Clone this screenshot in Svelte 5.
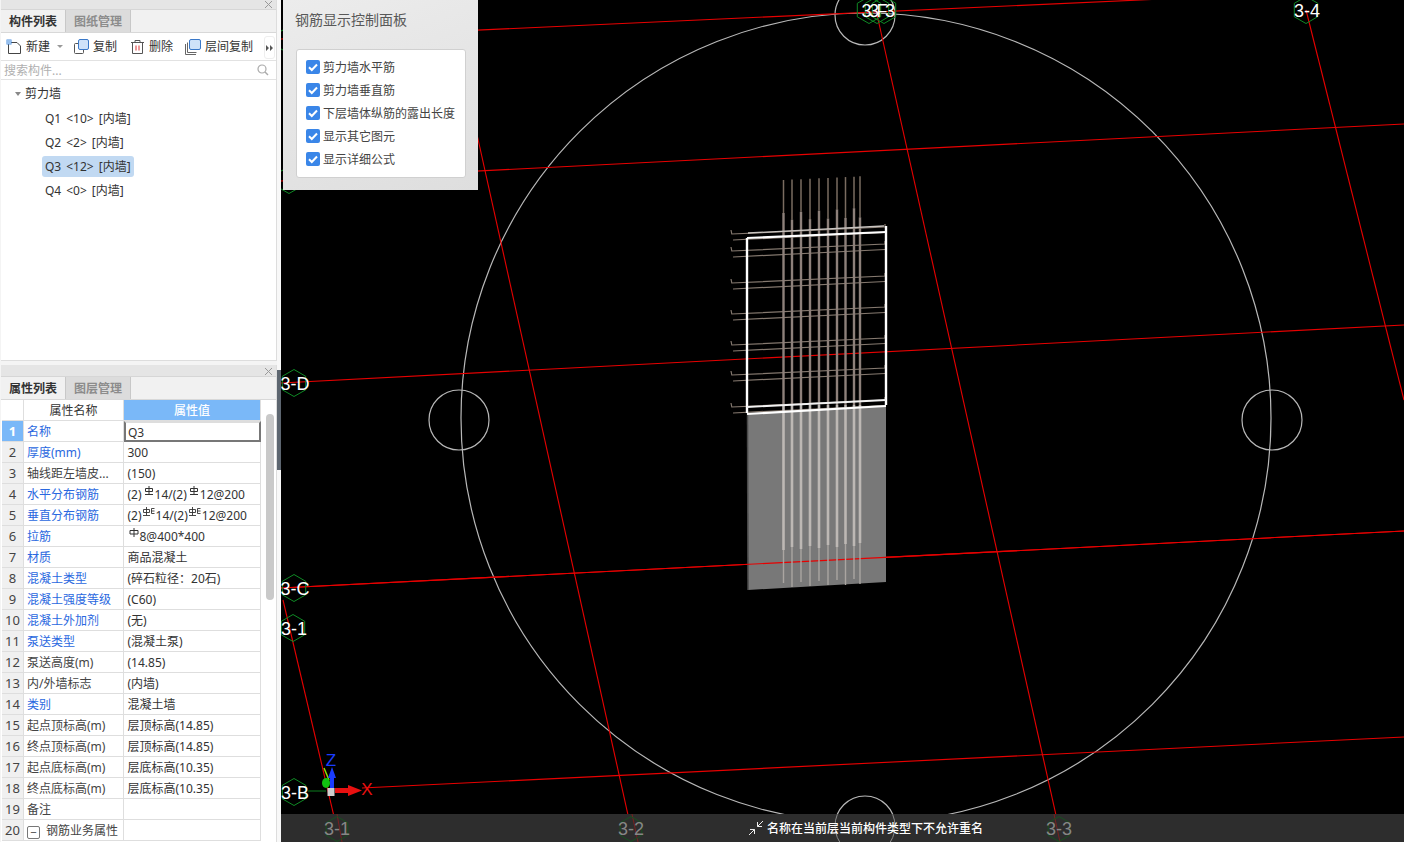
<script>
  const tree = [
    { q: 'Q1', n: '<10>', t: '[内墙]' },
    { q: 'Q2', n: '<2>', t: '[内墙]' },
    { q: 'Q3', n: '<12>', t: '[内墙]', sel: true },
    { q: 'Q4', n: '<0>', t: '[内墙]' }
  ];
  const rows = [
    ['名称', 'Q3', 1], ['厚度(mm)', '300', 1], ['轴线距左墙皮...', '(150)', 0],
    ['水平分布钢筋', 'h', 1], ['垂直分布钢筋', 'v', 1], ['拉筋', 't', 1],
    ['材质', '商品混凝土', 1], ['混凝土类型', '(碎石粒径：20石)', 1], ['混凝土强度等级', '(C60)', 1],
    ['混凝土外加剂', '(无)', 1], ['泵送类型', '(混凝土泵)', 1], ['泵送高度(m)', '(14.85)', 0],
    ['内/外墙标志', '(内墙)', 0], ['类别', '混凝土墙', 1], ['起点顶标高(m)', '层顶标高(14.85)', 0],
    ['终点顶标高(m)', '层顶标高(14.85)', 0], ['起点底标高(m)', '层底标高(10.35)', 0], ['终点底标高(m)', '层底标高(10.35)', 0],
    ['备注', '', 0], ['钢筋业务属性', '', 0]
  ];
  const checks = ['剪力墙水平筋', '剪力墙垂直筋', '下层墙体纵筋的露出长度', '显示其它图元', '显示详细公式'];

  const redLines = [
    [281, 39, 1404, -12], [281, 181, 1404, 124], [281, 383, 1404, 325], [281, 588, 1404, 531], [362, 788, 1404, 737],
    [283, 600, 340, 842], [476, 130, 634, 842], [876, 10, 1062, 842], [1306, 10, 1404, 400]
  ];
  const circles = [[866, 418, 405], [865, 15, 30], [865, 826, 30], [459, 420, 30], [1272, 420, 30]];
  const hex = (cx, cy, r = 13.5) =>
    [0, 1, 2, 3, 4, 5].map((i) => {
      const a = Math.PI / 3 * i + Math.PI / 2;
      return `${(cx + r * Math.cos(a)).toFixed(1)},${(cy + r * Math.sin(a)).toFixed(1)}`;
    }).join(' ');
  const labels = [
    [295, 383, '3-D'], [295, 588, '3-C'], [294, 628, '3-1'], [295, 792, '3-B'], [1307, 10, '3-4']
  ];
  const hexOnly = [[289, 40], [289, 180], [869, 10], [884, 10], [877, 10]];
  const bottomLabels = [[337, 829, '3-1'], [631, 829, '3-2'], [1059, 829, '3-3']];

  const barX = [783.5, 792, 801, 810, 819, 828, 837, 845.5, 854, 860];
  const bars = barX.map((x, i) => ({
    x,
    top: 180 - i * 0.42,
    thick: i % 2 ? 220 - i * 0.3 : 213 - i * 0.6,
    wallEnd: [550, 547, 549, 546, 548, 545, 547, 544, 546, 543][i],
    end: [583, 587, 582, 586, 581, 585, 580, 585, 579, 584][i]
  }));
  const hooks = [234, 251, 283, 314, 345, 375, 407];
</script>

<div class="app">
  <aside class="side">
    <section class="panel top">
      <div class="strip"><svg class="close" width="9" height="9" viewBox="0 0 9 9"><path d="M1 1l7 7M8 1l-7 7" stroke="#999" stroke-width="1"/></svg></div>
      <div class="tabs">
        <span class="tab on">构件列表</span><span class="tab">图纸管理</span>
      </div>
      <div class="tools">
        <span class="tool first">
          <svg width="16" height="16" viewBox="0 0 16 16"><path d="M2.500 3.500H11l3.500 3.500v7.500h-12z" fill="#fff" stroke="#444"/><rect x="0.500" y="0.500" width="5" height="5" fill="#4a90e2"/><path d="M1 2h4M1 4h4M2 1v4M4 1v4" stroke="#cfe3f7" stroke-width=".7"/></svg>
          新建<i class="caret"></i>
        </span>
        <span class="tool copy">
          <svg width="16" height="16" viewBox="0 0 16 16"><rect x="1.500" y="4.500" width="9" height="10" rx="1" fill="#fff" stroke="#555"/><rect x="5.500" y="0.500" width="10" height="10" rx="1.500" fill="#cfe2f9" stroke="#3a78c8"/></svg>
          复制
        </span>
        <span class="tool del">
          <svg width="15" height="16" viewBox="0 0 15 16"><path d="M1 3.500h13M5 3.500V1.500h5v2M2.500 3.500v11h10v-11" fill="none" stroke="#555"/><path d="M6 6.500v5M9 6.500v5" stroke="#d33" stroke-width="1"/></svg>
          删除
        </span>
        <span class="tool layer">
          <svg width="16" height="16" viewBox="0 0 16 16"><path d="M0.500 5v10.500H11M2.500 3.500v10h9" fill="none" stroke="#666"/><rect x="4.500" y="0.500" width="11" height="10" rx="1.500" fill="#cfe2f9" stroke="#3a78c8"/></svg>
          层间复制
        </span>
        <span class="more">
          <svg width="7" height="6" viewBox="0 0 7 6"><path d="M0 0l3 3-3 3zM4 0l3 3-3 3z" fill="#555"/></svg>
        </span>
      </div>
      <div class="search">
        <span>搜索构件...</span>
        <svg width="12" height="12" viewBox="0 0 12 12"><circle cx="5" cy="5" r="4" fill="none" stroke="#aaa" stroke-width="1.200"/><path d="M8 8l3 3" stroke="#aaa" stroke-width="1.400"/></svg>
      </div>
      <div class="tree">
        <div class="node"><i class="tri"></i>剪力墙</div>
        {#each tree as t}
          <div class="leaf"><span class="pill" class:sel={t.sel}>{t.q}<b>{t.n}</b>{t.t}</span></div>
        {/each}
      </div>
    </section>

    <section class="panel bottom">
      <div class="strip low"><svg class="close" width="9" height="9" viewBox="0 0 9 9"><path d="M1 1l7 7M8 1l-7 7" stroke="#999" stroke-width="1"/></svg></div>
      <div class="tabs">
        <span class="tab on">属性列表</span><span class="tab">图层管理</span>
      </div>
      <div class="body">
        <div class="grid">
          <div class="cell num head"></div>
          <div class="cell hname">属性名称</div>
          <div class="cell hval">属性值</div>
          {#each rows as r, i}
            <div class="cell num" class:cur={i === 0}>{i + 1}</div>
            <div class="cell name" class:link={r[2]}>
              {#if i === 19}<i class="minus">−</i>{/if}{r[0]}
            </div>
            <div class="cell val" class:edit={i === 0}>
              {#if r[1] === 'h'}
                (2)<svg class="rb" width="10" height="11" viewBox="0 0 10 11"><path d="M1.500 2.500h7v3h-7zM5 0v8.500M1 8.500h8" fill="none" stroke="#333"/></svg>14/(2)<svg class="rb" width="10" height="11" viewBox="0 0 10 11"><path d="M1.500 2.500h7v3h-7zM5 0v8.500M1 8.500h8" fill="none" stroke="#333"/></svg>12@200
              {:else if r[1] === 'v'}
                (2)<svg class="rb tight" width="12" height="11" viewBox="0 0 12 11"><path d="M.5 2.500h6v3h-6zM3.500 0v8.500M0 8.500h7M8.500 1.500h3M8.500 1.500v5h3M8.500 4h3" fill="none" stroke="#333" stroke-width=".9"/></svg>14/(2)<svg class="rb tight" width="12" height="11" viewBox="0 0 12 11"><path d="M.5 2.500h6v3h-6zM3.500 0v8.500M0 8.500h7M8.500 1.500h3M8.500 1.500v5h3M8.500 4h3" fill="none" stroke="#333" stroke-width=".9"/></svg>12@200
              {:else if r[1] === 't'}
                <svg class="rb tie" width="10" height="11" viewBox="0 0 10 11"><path d="M1 2.500h8v3.500H1zM5 0v9" fill="none" stroke="#333"/></svg>8@400*400
              {:else}
                {r[1]}
              {/if}
            </div>
          {/each}
        </div>
        <div class="scroll"><i></i></div>
      </div>
    </section>
  </aside>

  <div class="gutter"><i></i></div>

  <main class="view">
    <svg class="scene" width="1404" height="842" viewBox="0 0 1404 842">
      {#each circles as c}
        <circle cx={c[0]} cy={c[1]} r={c[2]} fill="none" stroke="#b8b8b8" stroke-width="1.200"/>
      {/each}
      {#each redLines as l}
        <line x1={l[0]} y1={l[1]} x2={l[2]} y2={l[3]} stroke="#e80000" stroke-width="1.100"/>
      {/each}

      <polygon points="747,413 886,405 886,582 748,590" fill="#787878"/>
      <line x1="747.500" y1="413" x2="748" y2="590" stroke="#4a4a4a" stroke-width="1.500"/>
      <line x1="281" y1="588" x2="1404" y2="531" stroke="#e80000" stroke-width="1.100"/>

      {#each hooks as y}
        <path d={`M731 ${y - 4}l.8 4 L885 ${y - 7}v-3`} fill="none" stroke="#85796f" stroke-width="1.200"/>
        <line x1="733" y1={y + 6} x2="885" y2={y - 1.500} stroke="#85796f" stroke-width="1.200"/>
      {/each}

      {#each bars as b}
        <line x1={b.x} y1={b.top} x2={b.x} y2={b.thick} stroke="#7a6c60" stroke-width="1.500"/>
        <line x1={b.x} y1={b.thick} x2={b.x} y2="405" stroke="#8d807a" stroke-width="2.400"/>
        <line x1={b.x} y1="405" x2={b.x} y2={b.wallEnd} stroke="#bdb8b4" stroke-width="2.600"/>
        <line x1={b.x} y1={b.wallEnd} x2={b.x} y2={b.end} stroke="#aaa5a1" stroke-width="1.400"/>
      {/each}

      <line x1="748" y1="233" x2="884" y2="226" stroke="#c9c4c0" stroke-width="1.300"/>
      <line x1="886" y1="226" x2="886" y2="405" stroke="#fff" stroke-width="2.400"/>
      <line x1="747" y1="238" x2="747" y2="413" stroke="#fff" stroke-width="2.400"/>
      <line x1="747" y1="238" x2="886" y2="232" stroke="#fff" stroke-width="2.200"/>
      <line x1="747" y1="407" x2="886" y2="400" stroke="#f2f2f2" stroke-width="1.800"/>
      <line x1="747" y1="414" x2="886" y2="406" stroke="#fff" stroke-width="2.200"/>

      {#each hexOnly as h}
        <polygon points={hex(h[0], h[1])} fill="none" stroke="#0f8a25" stroke-width="1"/>
      {/each}
      <text x="877" y="16.500" class="lab packed">33F3</text>
      {#each labels as l}
        <polygon points={hex(l[0] - 1, l[1])} fill="none" stroke="#0f8a25" stroke-width="1"/>
        <text x={l[0]} y={l[1] + 6.500} class="lab">{l[2]}</text>
      {/each}

      <line x1="308" y1="791" x2="326" y2="791" stroke="#0c7d1e"/>
      <line x1="324" y1="768" x2="329" y2="780" stroke="#8fe000" stroke-width="1.500"/>
      <ellipse cx="326" cy="783" rx="4" ry="5" fill="#10c010"/>
      <rect x="330" y="775" width="4" height="14" fill="#1a3cff"/>
      <polygon points="332,767 336,778 328,778" fill="#1a3cff"/>
      <rect x="335" y="788" width="15" height="5" fill="#e81010"/>
      <polygon points="348,785 362,790.500 348,796" fill="#e81010"/>
      <rect x="327.500" y="788" width="7" height="8" fill="#cfcfcf"/>
      <text x="331" y="766" class="axis z">Z</text>
      <text x="367" y="795" class="axis x">X</text>
    </svg>

    <div class="ctrl">
      <div class="ctitle">钢筋显示控制面板</div>
      <div class="cbox">
        {#each checks as c}
          <label class="chk">
            <span class="mark"><svg width="14" height="14" viewBox="0 0 14 14"><path d="M3 7.200l2.800 2.800L11 4.500" fill="none" stroke="#fff" stroke-width="2"/></svg></span>{c}
          </label>
        {/each}
      </div>
    </div>

    <div class="status">
      <svg class="bottomsvg" width="1123" height="28" viewBox="281 814 1123 28">
        <circle cx="865" cy="826" r="30" fill="none" stroke="#8a8a8a" stroke-width="1"/>
        <path d="M632 814l6 28M337 814l5 28M1054 814l6 28" stroke="#7a2020"/>
        {#each bottomLabels as l}
          <polygon points={hex(l[0], l[1], 12.500)} fill="none" stroke="#17501f"/>
          <text x={l[0]} y={l[1] + 6} class="lab dim">{l[2]}</text>
        {/each}
      </svg>
      <svg class="msgicon" width="16" height="16" viewBox="0 0 16 16"><path d="M15 1L9.500 6.500M9.500 2v4.500H14M1 15l5.500-5.500M2 9.500h4.500V14" fill="none" stroke="#eee" stroke-width="1"/></svg>
      <span class="msg">名称在当前层当前构件类型下不允许重名</span>
    </div>
  </main>
</div>

<style>
  :global(body) { margin: 0; background: #000; }
  .app {
    display: flex;
    width: 1404px;
    height: 842px;
    overflow: hidden;
    font-family: "Noto Sans", "Noto Sans CJK SC", sans-serif;
    font-size: 12px;
    color: #333;
  }
  .side {
    width: 277px;
    box-sizing: border-box;
    padding-left: 1px;
    display: flex;
    flex-direction: column;
    gap: 4px;
    background: #f4f4f4;
  }
  .gutter { width: 4px; background: #f8f8f8; padding-top: 370px; box-sizing: border-box; }
  .gutter i { display: block; height: 100px; background: #5d6670; }
  .panel { background: #fff; display: flex; flex-direction: column; border-right: 1px solid #ddd; }
  .panel.top { height: 361px; box-sizing: border-box; border-bottom: 1px solid #ddd; }
  .panel.bottom { flex: 1; min-height: 0; }
  .strip { height: 9px; background: #e5e5e5; border-bottom: 1px solid #d6d6d6; position: relative; }
  .strip.low { height: 11px; }
  .close { position: absolute; right: 3px; top: 0; }
  .strip.low .close { top: 2px; }
  .tabs { height: 22px; display: flex; background: #f1f1f1; border-bottom: 1px solid #d8d8d8; }
  .tab {
    width: 65px;
    text-align: center;
    line-height: 24px;
    font-weight: 700;
    color: #8c8c8c;
    background: #dcdcdc;
    box-sizing: border-box;
    border-right: 1px solid #c8c8c8;
  }
  .tab.on { color: #333; background: #f1f1f1; }
  .tools {
    height: 27px;
    display: flex;
    align-items: center;
    position: relative;
    border-bottom: 1px solid #e2e2e2;
    padding-left: 5px;
  }
  .tool { display: flex; align-items: center; gap: 4px; line-height: 16px; white-space: nowrap; }
  .first { width: 67px; }
  .copy { width: 57px; }
  .del { width: 55px; }
  .caret { border: 3px solid transparent; border-top: 3px solid #999; border-bottom: 0; margin-left: 3px; }
  .more {
    position: absolute;
    left: 263px;
    top: 3px;
    width: 9px;
    height: 21px;
    background: #fff;
    border: 1px solid #eee;
    border-radius: 3px;
    display: flex;
    align-items: center;
    justify-content: center;
  }
  .search {
    height: 18px;
    display: flex;
    align-items: center;
    justify-content: space-between;
    padding: 0 7px 0 3px;
    color: #b0b0b0;
    border-bottom: 1px solid #e2e2e2;
  }
  .tree { padding-top: 2px; }
  .node { height: 24px; line-height: 26px; padding-left: 14px; display: flex; align-items: center; gap: 4px; }
  .tri { border: 3.500px solid transparent; border-top: 4px solid #888; border-bottom: 0; }
  .leaf { height: 24px; padding-left: 41px; display: flex; align-items: center; }
  .pill { padding: 0 3px; line-height: 21px; border-radius: 3px; }
  .pill b { font-weight: 400; margin: 0 5px; }
  .pill.sel { background: #c1d9f2; }

  .body { flex: 1; min-height: 0; display: flex; }
  .grid {
    width: 259px;
    display: grid;
    grid-template-columns: 22px 100px 137px;
    grid-auto-rows: 21px;
    margin-left: 1px;
    overflow: hidden;
  }
  .cell {
    box-sizing: border-box;
    line-height: 22px;
    border-right: 1px solid #dedede;
    border-bottom: 1px solid #dedede;
    white-space: nowrap;
    overflow: hidden;
  }
  .num { background: #f0f0f0; text-align: center; font-size: 13px; color: #444; line-height: 21px; }
  .num.head { background: #fff; }
  .num.cur { background: #7ab8f8; color: #fff; font-weight: 700; }
  .hname { text-align: center; color: #333; }
  .hval { text-align: center; background: #7ab8f8; color: #fff; font-weight: 500; }
  .name { padding-left: 3px; color: #444; }
  .name.link { color: #2a68e0; }
  .val { padding-left: 3.500px; color: #333; }
  .val.edit { border: 2px solid #777; border-top-color: #ddd; border-left-color: #777; padding-left: 2px; line-height: 19px; }
  .rb { margin: 0 1px 0 2px; vertical-align: 2px; }
  .rb.tight { margin: 0 1px; }
  .tie { margin-left: 1px; }
  .minus {
    display: inline-block;
    width: 11px;
    height: 11px;
    border: 1px solid #777;
    border-radius: 2px;
    font: 11px/11px "Liberation Sans", sans-serif;
    text-align: center;
    margin-right: 6px;
    vertical-align: -1px;
  }
  .scroll { flex: 1; padding: 14px 0 0 5px; }
  .scroll i { display: block; width: 8px; height: 186px; background: #c9c9c9; border-radius: 4px; }

  .view { flex: 1; position: relative; background: #000; overflow: hidden; }
  .scene { position: absolute; left: -281px; top: 0; }
  .lab { fill: #fff; font: 18px "Liberation Sans", sans-serif; text-anchor: middle; }
  .lab.packed { letter-spacing: -2.500px; }
  .lab.dim { fill: #868686; }
  .axis { font: 17px "Liberation Sans", sans-serif; text-anchor: middle; }
  .z { fill: #1a3cff; }
  .x { fill: #e81010; }

  .ctrl {
    position: absolute;
    left: 2px;
    top: 0;
    width: 195px;
    height: 190px;
    box-sizing: border-box;
    padding: 10px 12px 0 12px;
    background: linear-gradient(160deg, #ececec, #dedede);
  }
  .ctitle { font-size: 14px; line-height: 19px; color: #585858; margin-bottom: 20px; }
  .cbox {
    height: 129px;
    box-sizing: border-box;
    margin-left: 1px;
    background: #fff;
    border: 1px solid #d0d0d0;
    border-radius: 3px;
    padding: 5px 0 0 9px;
  }
  .chk { display: flex; align-items: center; gap: 3px; height: 23px; color: #444; white-space: nowrap; }
  .mark { width: 14px; height: 14px; background: #3a86e8; border-radius: 2px; display: block; line-height: 0; }

  .status {
    position: absolute;
    left: 0;
    right: 0;
    bottom: 0;
    height: 28px;
    background: #2d2d2d;
    display: flex;
    align-items: center;
    padding-left: 467px;
    gap: 3px;
    color: #fff;
  }
  .bottomsvg { position: absolute; left: 0; top: 0; }
  .msgicon, .msg { position: relative; }
  .msg { font-weight: 500; }
</style>
